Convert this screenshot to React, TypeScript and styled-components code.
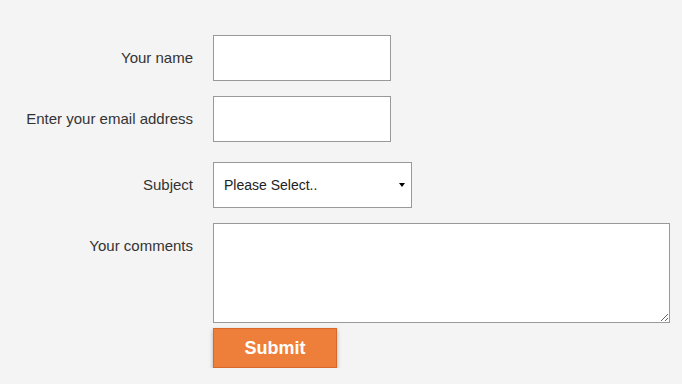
import React from "react";
import styled, { createGlobalStyle } from "styled-components";

const Global = createGlobalStyle`
  html, body { margin: 0; padding: 0; background: #f4f4f4; }
  body { font-family: Arial, "Liberation Sans", sans-serif; color: #333; }
  * { box-sizing: border-box; }
`;

const Form = styled.form`
  display: flex;
  flex-direction: column;
  padding-top: 35px;
`;

const Row = styled.div<{ $gap: number }>`
  display: grid;
  grid-template-columns: 193px auto;
  column-gap: 20px;
  align-items: start;
  margin-bottom: ${(p) => p.$gap}px;
`;

const Label = styled.label`
  text-align: right;
  font-size: 15px;
  line-height: 46px;
  color: #333;
  white-space: nowrap;
`;

const TextInput = styled.input`
  width: 178px;
  height: 46px;
  border: 1px solid #999;
  background: #fff;
  margin: 0;
  padding: 0 10px;
  font: 14px Arial, "Liberation Sans", sans-serif;
`;

const SelectWrap = styled.div`
  position: relative;
  width: 199px;
  height: 46px;
  &::after {
    content: "";
    position: absolute;
    right: 7px;
    top: 21px;
    border-left: 3.5px solid transparent;
    border-right: 3.5px solid transparent;
    border-top: 4px solid #000;
    pointer-events: none;
  }
`;

const Select = styled.select`
  appearance: none;
  width: 100%;
  height: 100%;
  border: 1px solid #999;
  border-radius: 0;
  background: #fff;
  margin: 0;
  padding: 0 0 0 10px;
  font: 14px Arial, "Liberation Sans", sans-serif;
  color: #222;
`;

const TextArea = styled.textarea`
  display: block;
  width: 457px;
  height: 100px;
  border: 1px solid #999;
  background: #fff;
  margin: 0;
  padding: 6px 10px;
  font: 14px Arial, "Liberation Sans", sans-serif;
`;

const Submit = styled.button`
  width: 124px;
  height: 40px;
  background: #ed7f3b;
  border: 1px solid #d8682a;
  color: #fff;
  font: bold 18px Arial, "Liberation Sans", sans-serif;
  box-shadow: 0 2px 4px rgba(0, 0, 0, 0.3);
  cursor: pointer;
  padding: 0;
`;

export default function App() {
  return (
    <>
      <Global />
      <Form onSubmit={(e) => e.preventDefault()}>
        <Row $gap={15}>
          <Label htmlFor="name">Your name</Label>
          <TextInput id="name" type="text" />
        </Row>
        <Row $gap={20}>
          <Label htmlFor="email">Enter your email address</Label>
          <TextInput id="email" type="email" />
        </Row>
        <Row $gap={15}>
          <Label htmlFor="subject">Subject</Label>
          <SelectWrap>
            <Select id="subject" defaultValue="">
              <option value="">Please Select..</option>
              <option value="general">General</option>
              <option value="support">Support</option>
            </Select>
          </SelectWrap>
        </Row>
        <Row $gap={5}>
          <Label htmlFor="comments">Your comments</Label>
          <TextArea id="comments" />
        </Row>
        <Row $gap={0}>
          <span />
          <Submit type="submit">Submit</Submit>
        </Row>
      </Form>
    </>
  );
}
